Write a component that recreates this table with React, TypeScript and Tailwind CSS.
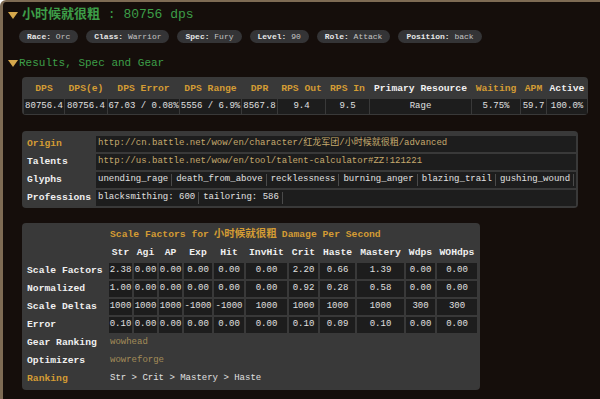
const mono = "font-['Liberation_Mono','Noto_Sans_CJK_SC',monospace]";

function Tri() {
  return (
    <svg width="10" height="7" viewBox="0 0 10 7" className="shrink-0">
      <polygon points="0,0 10,0 5,7" fill="#d6a84c" />
    </svg>
  );
}

const badges = [
  ["Race", "Orc"],
  ["Class", "Warrior"],
  ["Spec", "Fury"],
  ["Level", "90"],
  ["Role", "Attack"],
  ["Position", "back"],
];

const summaryHead: [string, boolean][] = [
  ["DPS", true],
  ["DPS(e)", true],
  ["DPS Error", true],
  ["DPS Range", true],
  ["DPR", true],
  ["RPS Out", true],
  ["RPS In", true],
  ["Primary Resource", false],
  ["Waiting", true],
  ["APM", true],
  ["Active", false],
];

const summaryRow = ["80756.4", "80756.4", "67.03 / 0.08%", "5556 / 6.9%", "8567.8", "9.4", "9.5", "Rage", "5.75%", "59.7", "100.0%"];

const glyphs = ["unending_rage", "death_from_above", "recklessness", "burning_anger", "blazing_trail", "gushing_wound"];
const professions = ["blacksmithing: 600", "tailoring: 586"];

const statCols = ["Str", "Agi", "AP", "Exp", "Hit", "InvHit", "Crit", "Haste", "Mastery", "Wdps", "WOHdps"];
const statRows: [string, string[]][] = [
  ["Scale Factors", ["2.38", "0.00", "0.00", "0.00", "0.00", "0.00", "2.20", "0.66", "1.39", "0.00", "0.00"]],
  ["Normalized", ["1.00", "0.00", "0.00", "0.00", "0.00", "0.00", "0.92", "0.28", "0.58", "0.00", "0.00"]],
  ["Scale Deltas", ["1000", "1000", "1000", "-1000", "-1000", "1000", "1000", "1000", "1000", "300", "300"]],
  ["Error", ["0.10", "0.00", "0.00", "0.00", "0.00", "0.00", "0.10", "0.09", "0.10", "0.00", "0.00"]],
];

export default function App() {
  return (
    <div className={`w-[600px] h-[399px] overflow-hidden bg-[#150e0b] border-l-[3px] border-t-2 border-[#7e6b54] rounded-tl-[6px] pl-[5px] ${mono}`}>
      {/* title */}
      <div className="flex items-center gap-[4px] pt-[5px] h-[21px] text-[13px] leading-[16px] text-[#3d9e48]">
        <Tri />
        <span>
          <span className="font-bold">小时候就很粗</span> : 80756 dps
        </span>
      </div>

      {/* badges */}
      <div className="flex gap-2 ml-[11px] mt-[7px]">
        {badges.map(([k, v]) => (
          <div key={k} className="h-[13px] px-2 rounded-full bg-[#343436] text-[8px] leading-[13px] whitespace-nowrap">
            <span className="font-bold text-[#e6e6e6]">{k}:</span>
            <span className="text-[#c4c4c4]"> {v}</span>
          </div>
        ))}
      </div>

      {/* results heading */}
      <div className="flex items-center gap-[1px] mt-[13px] h-[14px] text-[11px] leading-[14px] text-[#3d9e48]">
        <Tri />
        <span>Results, Spec and Gear</span>
      </div>

      {/* summary table */}
      <div className="ml-[14px] mt-[7px] w-[566px] rounded-[4px] bg-[#393939] pl-[2px] pr-px pt-[3px] pb-px">
        <div className="grid grid-cols-[40px_42px_71px_61px_35px_47px_43px_101px_48px_25px_40px] gap-px">
          {summaryHead.map(([h, orange]) => (
            <div
              key={h}
              className={`h-[18px] flex items-center justify-center font-bold text-[9.7px] whitespace-nowrap ${orange ? "text-[#d49c34]" : "text-[#f0f0f0]"}`}
            >
              {h}
            </div>
          ))}
          {summaryRow.map((v, i) => (
            <div key={i} className="h-[15px] flex items-center justify-center bg-[#1d1d1d] text-[9px] text-[#e0e0e0] whitespace-nowrap">
              {v}
            </div>
          ))}
        </div>
      </div>

      {/* spec table */}
      <div className="ml-[14px] mt-4 w-[556px] rounded-[4px] bg-[#393939] pl-[2px] pr-[2px] pt-[5px] pb-[2px]">
        <div className="grid grid-cols-[71px_480px] gap-x-px gap-y-[2px] text-[9px]">
          <div className="h-4 flex items-center pl-[3px] font-bold text-[9.7px] text-[#d49c34]">Origin</div>
          <div className="h-4 flex items-center pl-[2px] bg-[#1d1d1d] text-[#c6aa6e] whitespace-nowrap">
            http://cn.battle.net/wow/en/character/红龙军团/小时候就很粗/advanced
          </div>
          <div className="h-4 flex items-center pl-[3px] font-bold text-[9.7px] text-[#f0f0f0]">Talents</div>
          <div className="h-4 flex items-center pl-[2px] bg-[#1d1d1d] text-[#c6aa6e] whitespace-nowrap">
            http://us.battle.net/wow/en/tool/talent-calculator#ZZ!121221
          </div>
          <div className="h-4 flex items-center pl-[3px] font-bold text-[9.7px] text-[#f0f0f0]">Glyphs</div>
          <div className="h-4 flex items-center pl-[2px] bg-[#1d1d1d] text-[#e0e0e0] whitespace-nowrap">
            {glyphs.map((g) => (
              <span key={g} className="h-[12px] flex items-center pr-[3px] mr-[4px] border-r border-[#4a4a4a]">
                {g}
              </span>
            ))}
          </div>
          <div className="h-4 flex items-center pl-[3px] font-bold text-[9.7px] text-[#f0f0f0]">Professions</div>
          <div className="h-4 flex items-center pl-[2px] bg-[#1d1d1d] text-[#e0e0e0] whitespace-nowrap">
            {professions.map((g) => (
              <span key={g} className="h-[12px] flex items-center pr-[3px] mr-[4px] border-r border-[#4a4a4a]">
                {g}
              </span>
            ))}
          </div>
        </div>
      </div>

      {/* scale factors */}
      <div className="ml-[14px] mt-[15px] w-[458px] rounded-[4px] bg-[#393939] pl-[2px] pr-[3px] pt-[4px] pb-[3px]">
        <div className="grid grid-cols-[83px_23px_23px_23px_28px_30px_41px_29px_35px_47px_29px_40px] gap-[2px]">
          <div className="h-4" />
          <div className="col-span-11 h-4 flex items-center pl-px font-bold text-[9.7px] text-[#d49c34] whitespace-nowrap">
            Scale Factors for <span className="text-[10.5px] mx-[5px]">小时候就很粗</span>Damage Per Second
          </div>

          <div className="h-4" />
          {statCols.map((c) => (
            <div key={c} className="h-4 flex items-center justify-center font-bold text-[9.7px] text-[#f0f0f0]">
              {c}
            </div>
          ))}

          {statRows.map(([label, vals]) => (
            <div key={label} className="contents">
              <div className="h-4 flex items-center pl-[3px] font-bold text-[9.7px] text-[#f0f0f0] whitespace-nowrap">{label}</div>
              {vals.map((v, i) => (
                <div key={i} className="h-4 flex items-center justify-center bg-[#1d1d1d] text-[9px] text-[#e0e0e0]">
                  {v}
                </div>
              ))}
            </div>
          ))}

          <div className="h-4 flex items-center pl-[3px] font-bold text-[9.7px] text-[#f0f0f0]">Gear Ranking</div>
          <div className="col-span-11 h-4 flex items-center pl-px text-[9px] text-[#a48c58]">wowhead</div>
          <div className="h-4 flex items-center pl-[3px] font-bold text-[9.7px] text-[#f0f0f0]">Optimizers</div>
          <div className="col-span-11 h-4 flex items-center pl-px text-[9px] text-[#a48c58]">wowreforge</div>
          <div className="h-4 flex items-center pl-[3px] font-bold text-[9.7px] text-[#d49c34]">Ranking</div>
          <div className="col-span-11 h-4 flex items-center pl-px text-[9px] text-[#e0e0e0]">Str &gt; Crit &gt; Mastery &gt; Haste</div>
        </div>
      </div>
    </div>
  );
}
